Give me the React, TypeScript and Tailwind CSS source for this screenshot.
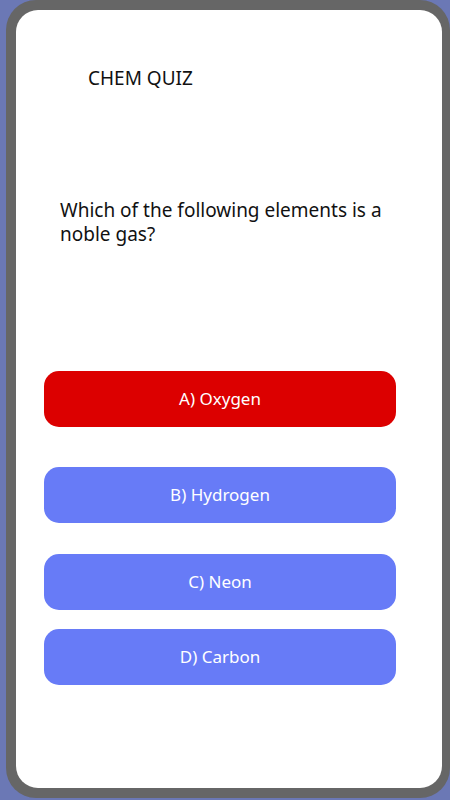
const options = [
  { label: 'A) Oxygen', wrong: true, mt: 'mt-0' },
  { label: 'B) Hydrogen', wrong: false, mt: 'mt-[40px]' },
  { label: 'C) Neon', wrong: false, mt: 'mt-[31px]' },
  { label: 'D) Carbon', wrong: false, mt: 'mt-[19px]' },
];

export default function App() {
  return (
    <div className="w-[450px] h-[800px] bg-[#6b78b5] overflow-hidden pl-[6px] font-['Noto_Sans','Open_Sans',sans-serif]">
      <div className="w-[444px] h-[798px] bg-[#666666] rounded-[30px] p-[10px] pl-[10px] pr-[8px]">
        <div className="h-full bg-white rounded-[22px] pt-[54px]">
          <h1 className="pl-[72px] text-[19px] leading-[28px] text-[#111]">CHEM QUIZ</h1>
          <p className="mt-[106px] pl-[44px] pr-[40px] text-[19px] leading-[24px] text-[#111]">
            Which of the following elements is a noble gas?
          </p>
          <div className="mt-[125px] flex flex-col pl-[28px]">
            {options.map((o) => (
              <button
                key={o.label}
                className={`${o.mt} w-[352px] h-[56px] rounded-[15px] text-white text-[17px] flex items-center justify-center ${
                  o.wrong ? 'bg-[#dc0000]' : 'bg-[#677bf7]'
                }`}
              >
                {o.label}
              </button>
            ))}
          </div>
        </div>
      </div>
    </div>
  );
}
